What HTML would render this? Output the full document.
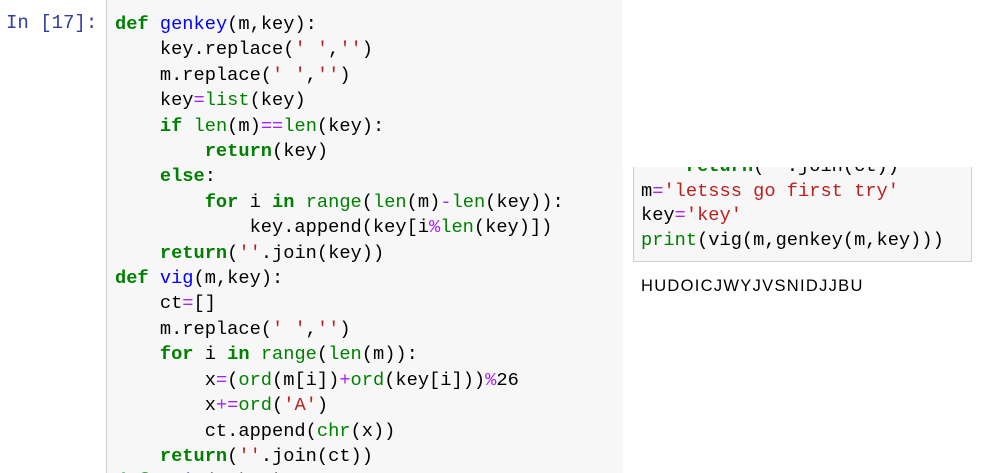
<!DOCTYPE html>
<html><head><meta charset="utf-8"><style>
body{margin:0;width:983px;height:473px;overflow:hidden;background:#fff;position:relative;font-family:"Liberation Mono",monospace}
.prompt{position:absolute;left:6px;top:11px;color:#303F9F;font-size:19px;line-height:24px}
.cell{position:absolute;left:106px;top:0;width:516px;height:473px;background:#f7f7f7;border-left:1px solid #cfcfcf;overflow:hidden}
pre{margin:0;font-family:"Liberation Mono",monospace;font-size:18.7px;line-height:25.4px;color:#000;white-space:pre}
.k{color:#008000;font-weight:bold}.b{color:#008000}.f{color:#0000ff}.s{color:#ba2121}.o{color:#aa22ff}
.c2{position:absolute;left:633px;top:150px;width:337px;height:111px;background:#f7f7f7;border:1px solid #cfcfcf;border-top:none;overflow:hidden}
.c2 pre{line-height:24.6px}
.cover{position:absolute;left:622px;top:0;width:361px;height:167px;background:#fff}
.out{position:absolute;left:641px;top:277px;font-family:"Liberation Sans",sans-serif;font-size:16.5px;color:#000;letter-spacing:1.3px}
</style></head><body>
<div class="prompt">In [17]:</div>
<div class="cell"><pre style="position:absolute;left:8px;top:12px"><span class="k">def</span> <span class="f">genkey</span>(m,key):
    key.replace(<span class="s">' '</span>,<span class="s">''</span>)
    m.replace(<span class="s">' '</span>,<span class="s">''</span>)
    key<span class="o">=</span><span class="b">list</span>(key)
    <span class="k">if</span> <span class="b">len</span>(m)<span class="o">==</span><span class="b">len</span>(key):
        <span class="k">return</span>(key)
    <span class="k">else</span>:
        <span class="k">for</span> i <span class="k">in</span> <span class="b">range</span>(<span class="b">len</span>(m)<span class="o">-</span><span class="b">len</span>(key)):
            key.append(key[i<span class="o">%</span><span class="b">len</span>(key)])
    <span class="k">return</span>(<span class="s">''</span>.join(key))
<span class="k">def</span> <span class="f">vig</span>(m,key):
    ct<span class="o">=</span>[]
    m.replace(<span class="s">' '</span>,<span class="s">''</span>)
    <span class="k">for</span> i <span class="k">in</span> <span class="b">range</span>(<span class="b">len</span>(m)):
        x<span class="o">=</span>(<span class="b">ord</span>(m[i])<span class="o">+</span><span class="b">ord</span>(key[i]))<span class="o">%</span>26
        x<span class="o">+=</span><span class="b">ord</span>(<span class="s">'A'</span>)
        ct.append(<span class="b">chr</span>(x))
    <span class="k">return</span>(<span class="s">''</span>.join(ct))
<span class="k">def</span> <span class="f">main</span>(m,key):</pre></div>
<div class="c2"><pre style="position:absolute;left:7px;top:4px">    <span class="k">return</span>(<span class="s">''</span>.join(ct))
m<span class="o">=</span><span class="s">'letsss go first try'</span>
key<span class="o">=</span><span class="s">'key'</span>
<span class="b">print</span>(vig(m,genkey(m,key)))</pre></div>
<div class="cover"></div>
<div class="out">HUDOICJWYJVSNIDJJBU</div>
</body></html>
